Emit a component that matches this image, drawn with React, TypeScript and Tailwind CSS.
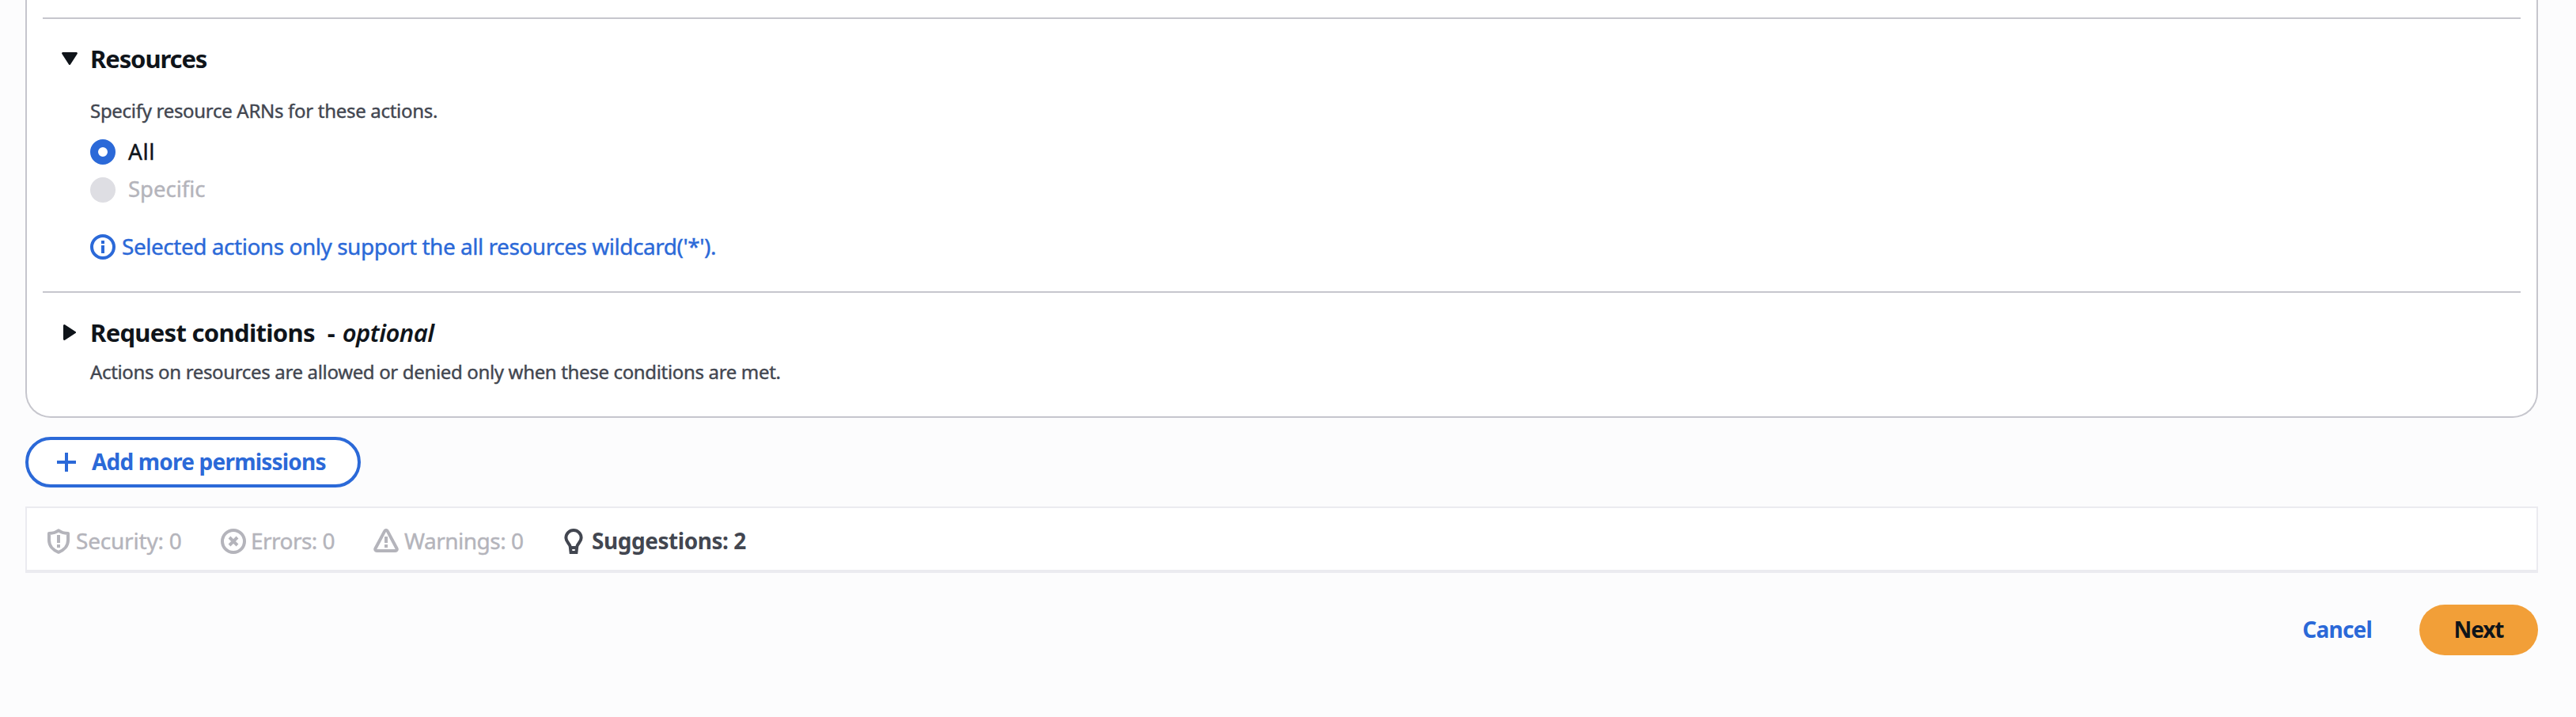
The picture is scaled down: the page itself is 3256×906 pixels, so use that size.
import type { ReactNode } from "react";

const iconProps = { viewBox: "0 0 16 16", fill: "none", stroke: "currentColor", strokeWidth: 2 } as const;

function InfoIcon() {
  return (
    <svg {...iconProps} className="size-8 shrink-0">
      <circle cx="8" cy="8" r="7" />
      <path d="M8 7v5M8 4v2" />
    </svg>
  );
}

function ShieldIcon() {
  return (
    <svg {...iconProps} className="size-8 shrink-0">
      <path d="M8 1.100C6.600 2.200 4.300 2.900 2 3v4.300c0 3.500 2.400 6.300 6 7.600 3.600-1.300 6-4.100 6-7.600V3c-2.300-.1-4.600-.8-6-1.900Z" strokeLinejoin="round" />
      <path d="M8 4v5M8 10v2" />
    </svg>
  );
}

function ErrorIcon() {
  return (
    <svg {...iconProps} className="size-8 shrink-0">
      <circle cx="8" cy="8" r="7" />
      <path d="m5.500 5.500 5 5M10.500 5.500l-5 5" />
    </svg>
  );
}

function WarningIcon() {
  return (
    <svg {...iconProps} className="size-8 shrink-0">
      <path d="M8.900 1.550a1 1 0 0 0-1.800 0L1.200 12.600A1 1 0 0 0 2.100 14h11.800a1 1 0 0 0 .9-1.400L8.900 1.550Z" strokeLinejoin="round" />
      <path d="M8 5v4M8 10v2" />
    </svg>
  );
}

function BulbIcon() {
  return (
    <svg {...iconProps} className="size-8 shrink-0">
      <path d="M6 12h4" />
      <path d="M8 1a4.800 4.800 0 0 0-4.800 4.900c0 2.600 2.500 3.500 2.700 5.600l.4 3.500h3.400l.4-3.500c.2-2.100 2.700-3 2.700-5.600A4.800 4.800 0 0 0 8 1Z" />
      <path d="M6.200 15h3.600" />
    </svg>
  );
}

function Status({ icon, active, className, children }: { icon: ReactNode; active?: boolean; className: string; children: string }) {
  return (
    <div className={active ? "flex items-center font-bold text-[#424650]" : "flex items-center text-[#b4b4bb] [-webkit-text-stroke:0.4px]"}>
      {icon}
      <span className={"whitespace-nowrap pb-0.5 " + className}>{children}</span>
    </div>
  );
}

export default function App() {
  return (
    <div className="h-[906px] w-[3256px] overflow-hidden bg-[#fcfcfd] pr-12 pl-8 font-['Noto_Sans',sans-serif] text-[28px] leading-8 text-[#0f141a]">
      <section className="flex h-[528px] flex-col rounded-b-[32px] border-x-2 border-b-2 border-[#c6c6cd] bg-white px-5 pt-[22px]">
        <div className="h-0.5 shrink-0 bg-[#c6c6cd]" />
        <div className="mt-[30px] flex h-10 items-center">
          <svg viewBox="0 0 20 16" className="ml-6 h-4 w-5 shrink-0" fill="currentColor">
            <path d="M1.500 0h17a1.300 1.300 0 0 1 1.200 2L11 15.400a1.200 1.200 0 0 1-2 0L.3 2A1.300 1.300 0 0 1 1.500 0Z" />
          </svg>
          <h2 className="ml-4 text-[31px] font-bold tracking-[-1.1px]">Resources</h2>
        </div>
        <div className="pl-[60px] [-webkit-text-stroke:0.4px]">
          <p className="mt-[30px] text-[24px] tracking-[-0.300px] text-[#424650]">Specify resource ARNs for these actions.</p>
          <label className="mt-5 flex h-8 items-center">
            <span className="size-8 rounded-full border-[10px] border-[#2b69d8] bg-white" />
            <span className="ml-4 pb-0.5 tracking-[0.6px]">All</span>
          </label>
          <label className="mt-4 flex h-8 items-center">
            <span className="size-8 rounded-full bg-[#dedee3]" />
            <span className="ml-4 pb-0.5 text-[27.5px] text-[#b4b4bb]">Specific</span>
          </label>
          <div className="mt-10 flex h-8 items-center text-[#2b69d8]">
            <InfoIcon />
            <span className="ml-2 pb-0.5 tracking-[-0.470px]">Selected actions only support the all resources wildcard('*').</span>
          </div>
        </div>
        <div className="mt-10 h-0.5 shrink-0 bg-[#c6c6cd]" />
        <div className="mt-[30px] flex h-10 items-center">
          <svg viewBox="0 0 16 20" className="ml-[26px] h-5 w-4 shrink-0" fill="currentColor">
            <path d="M0 1.500v17a1.300 1.300 0 0 0 2 1.200L15.400 11a1.200 1.200 0 0 0 0-2L2 .3A1.300 1.300 0 0 0 0 1.500Z" />
          </svg>
          <h2 className="ml-[18px] text-[31px] font-bold tracking-[-0.700px]">Request conditions</h2>
          <span className="ml-4 text-[31px] font-bold">-</span>
          <em className="ml-[9px] text-[31px] font-semibold tracking-[-0.500px]">optional</em>
        </div>
        <p className="mt-3.5 pl-[60px] text-[24px] tracking-[-0.340px] text-[#424650] [-webkit-text-stroke:0.4px]">
          Actions on resources are allowed or denied only when these conditions are met.
        </p>
      </section>

      <button className="mt-6 flex h-16 w-[424px] items-center rounded-full border-4 border-[#2b69d8] bg-white pl-9 font-bold text-[#2b69d8]">
        <svg viewBox="0 0 24 24" className="size-6 shrink-0" stroke="currentColor" strokeWidth="4">
          <path d="M12 0v24M0 12h24" />
        </svg>
        <span className="ml-5 pb-0.5 tracking-[-0.800px] whitespace-nowrap">Add more permissions</span>
      </button>

      <div className="mt-6 flex h-[84px] items-center gap-[46px] border-2 border-b-4 border-[#ebebf0] bg-white pt-1.5 pl-6">
        <Status icon={<ShieldIcon />} className="ml-1.5 w-[137px] tracking-[-0.200px]">Security: 0</Status>
        <Status icon={<ErrorIcon />} className="ml-1.5 w-[109px] tracking-[-0.550px]">Errors: 0</Status>
        <Status icon={<WarningIcon />} className="ml-[7px] w-[152px] tracking-[-0.500px]">Warnings: 0</Status>
        <Status icon={<BulbIcon />} active className="ml-[7px] tracking-[-0.450px]">Suggestions: 2</Status>
      </div>

      <div className="mt-10 flex h-16 items-center justify-end">
        <button className="mr-[60px] pb-0.5 font-bold tracking-[-0.800px] text-[#2b69d8]">Cancel</button>
        <button className="h-16 w-[150px] rounded-full bg-[#f29f38] pb-0.5 font-bold tracking-[-1.1px]">Next</button>
      </div>
    </div>
  );
}
